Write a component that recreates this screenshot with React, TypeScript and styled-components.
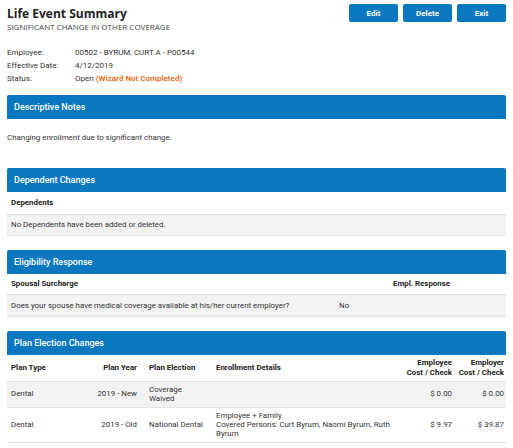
import React from 'react'
import styled, { createGlobalStyle } from 'styled-components'

const GlobalStyle = createGlobalStyle`
  *, *::before, *::after {
    box-sizing: border-box;
  }
  body {
    margin: 0;
    background: #fff;
    font-family: Roboto, 'Liberation Sans', sans-serif;
    color: #333;
  }
`

const BLUE = '#0a78c1'

const Page = styled.div`
  padding: 4px 7px 0 7px;
`

const TopBar = styled.div`
  display: flex;
  justify-content: space-between;
  align-items: flex-start;
`

const TitleBlock = styled.div`
  padding-top: 2px;
`

const Title = styled.h1`
  margin: 0;
  font-family: 'Open Sans', sans-serif;
  font-weight: 700;
  font-size: 12px;
  line-height: 15px;
  color: #222;
`

const Subtitle = styled.div`
  font-family: 'Open Sans', sans-serif;
  font-size: 8px;
  line-height: 10px;
  color: #444;
  margin-top: 1px;
`

const Buttons = styled.div`
  display: flex;
  gap: 5px;
`

const Button = styled.button`
  width: 49px;
  height: 18px;
  border: none;
  border-radius: 2px;
  background: ${BLUE};
  color: #fff;
  font-family: Roboto, sans-serif;
  font-weight: 700;
  font-size: 8px;
  padding: 0;
`

const InfoGrid = styled.div`
  display: grid;
  grid-template-columns: 68px 1fr;
  margin-top: 14px;
  font-size: 8px;
  line-height: 13px;
`

const Warning = styled.span`
  color: #e8742b;
  font-weight: 700;
`

const Section = styled.section<{ $first?: boolean }>`
  margin-top: ${(p) => (p.$first ? '10px' : '14px')};
`

const SectionHeader = styled.div`
  height: 24px;
  display: flex;
  align-items: center;
  padding-left: 7px;
  background: ${BLUE};
  border-radius: 2px 2px 0 0;
  color: #fff;
  font-weight: 500;
  font-size: 9px;
`

const Notes = styled.p`
  margin: 0;
  padding: 14px 0 12px 0;
  font-size: 7.9px;
  line-height: 9px;
`

const Table = styled.table`
  width: 100%;
  border-collapse: collapse;
  table-layout: fixed;
  font-size: 7.9px;
  line-height: 9.3px;
`

const Th = styled.th<{ $right?: boolean; $w?: number }>`
  text-align: ${(p) => (p.$right ? 'right' : 'left')};
  width: ${(p) => (p.$w ? `${p.$w}px` : 'auto')};
  font-weight: 700;
  color: #222;
  padding: 0 4px 0 8px;
  white-space: nowrap;

  &:first-child {
    padding-left: 4px;
  }
  &:last-child:not(:first-child) {
    padding: 0 2px;
  }
`

const HeadRow = styled.tr<{ $h: number }>`
  height: ${(p) => p.$h}px;
`

const Row = styled.tr<{ $h: number; $shade?: boolean }>`
  height: ${(p) => p.$h}px;
  background: ${(p) => (p.$shade ? '#f2f2f2' : '#fff')};
  border-top: 1px solid #e2e2e2;
  border-bottom: 1px solid #e2e2e2;
`

const Td = styled.td<{ $right?: boolean }>`
  text-align: ${(p) => (p.$right ? 'right' : 'left')};
  white-space: ${(p) => (p.$right ? 'nowrap' : 'normal')};
  padding: 0 4px 0 8px;
  vertical-align: middle;

  &:first-child {
    padding-left: 4px;
  }
  &:last-child:not(:first-child) {
    padding: 0 2px;
  }
`

const plans = [
  {
    type: 'Dental',
    year: '2019 - New',
    election: ['Coverage', 'Waived'],
    details: [] as string[],
    employee: '$ 0.00',
    employer: '$ 0.00',
  },
  {
    type: 'Dental',
    year: '2019 - Old',
    election: ['National Dental'],
    details: ['Employee + Family', 'Covered Persons: Curt Byrum, Naomi Byrum, Ruth Byrum'],
    employee: '$ 9.97',
    employer: '$ 39.87',
  },
]

export default function App() {
  return (
    <Page>
      <GlobalStyle />
      <TopBar>
        <TitleBlock>
          <Title>Life Event Summary</Title>
          <Subtitle>SIGNIFICANT CHANGE IN OTHER COVERAGE</Subtitle>
        </TitleBlock>
        <Buttons>
          <Button>Edit</Button>
          <Button>Delete</Button>
          <Button>Exit</Button>
        </Buttons>
      </TopBar>

      <InfoGrid>
        <span>Employee:</span>
        <span>00502 - BYRUM, CURT A - P00544</span>
        <span>Effective Date:</span>
        <span>4/12/2019</span>
        <span>Status:</span>
        <span>
          Open <Warning>(Wizard Not Completed)</Warning>
        </span>
      </InfoGrid>

      <Section $first>
        <SectionHeader>Descriptive Notes</SectionHeader>
        <Notes>Changing enrollment due to significant change.</Notes>
      </Section>

      <Section>
        <SectionHeader>Dependent Changes</SectionHeader>
        <Table>
          <thead>
            <HeadRow $h={22}>
              <Th>Dependents</Th>
            </HeadRow>
          </thead>
          <tbody>
            <Row $h={21} $shade>
              <Td>No Dependents have been added or deleted.</Td>
            </Row>
          </tbody>
        </Table>
      </Section>

      <Section>
        <SectionHeader>Eligibility Response</SectionHeader>
        <Table>
          <thead>
            <HeadRow $h={21}>
              <Th $w={324}>Spousal Surcharge</Th>
              <Th $w={60}></Th>
              <Th>Empl. Response</Th>
            </HeadRow>
          </thead>
          <tbody>
            <Row $h={22} $shade>
              <Td>Does your spouse have medical coverage available at his/her current employer?</Td>
              <Td>No</Td>
              <Td></Td>
            </Row>
          </tbody>
        </Table>
      </Section>

      <Section>
        <SectionHeader>Plan Election Changes</SectionHeader>
        <Table>
          <thead>
            <HeadRow $h={26}>
              <Th $w={80}>Plan Type</Th>
              <Th $w={54} $right>
                Plan Year
              </Th>
              <Th $w={67}>Plan Election</Th>
              <Th>Enrollment Details</Th>
              <Th $w={58} $right>
                Employee
                <br />
                Cost / Check
              </Th>
              <Th $w={50} $right>
                Employer
                <br />
                Cost / Check
              </Th>
            </HeadRow>
          </thead>
          <tbody>
            {plans.map((p, i) => (
              <Row key={i} $h={i === 0 ? 26 : 35} $shade={i === 0}>
                <Td>{p.type}</Td>
                <Td $right>{p.year}</Td>
                <Td>
                  {p.election.map((l, j) => (
                    <div key={j}>{l}</div>
                  ))}
                </Td>
                <Td>
                  {p.details.map((l, j) => (
                    <div key={j}>{l}</div>
                  ))}
                </Td>
                <Td $right>{p.employee}</Td>
                <Td $right>{p.employer}</Td>
              </Row>
            ))}
          </tbody>
        </Table>
      </Section>
    </Page>
  )
}
